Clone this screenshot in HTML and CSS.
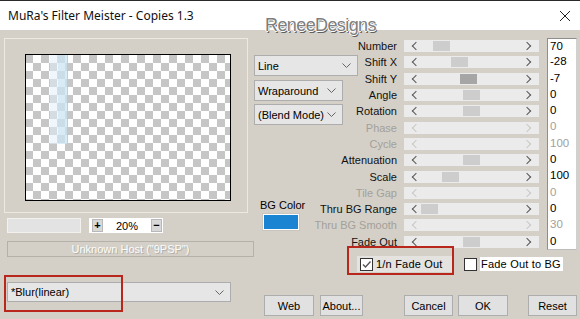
FILE: index.html
```html
<!DOCTYPE html>
<html lang="en">
<head>
    <meta charset="UTF-8">
    <title>MuRa's Filter Meister - Copies 1.3</title>
    <link rel="stylesheet" href="styles.css">
</head>
<body>
<div class="window">
    <div class="titlebar">
        <span class="title">MuRa's Filter Meister - Copies 1.3</span>
        <svg class="close" width="12" height="12" viewBox="0 0 12 12"><path d="M1 1 L11 11 M11 1 L1 11" stroke="#222" stroke-width="1"/></svg>
    </div>

    <div class="body">
        <!-- preview side -->
        <div class="left">
            <div class="preview-group">
                <div class="preview">
                    <div class="streak"></div>
                </div>
            </div>
            <div class="zoom-row">
                <div class="zoom-field"></div>
                <div class="zoom-strip">
                    <span class="zbtn">+</span>
                    <span class="zval">20%</span>
                    <span class="zbtn">&minus;</span>
                </div>
            </div>
            <div class="host">Unknown Host ("9PSP")</div>
            <div class="combo combo-blur">
                <span>*Blur(linear)</span>
                <svg width="9" height="5" viewBox="0 0 9 5"><path d="M0.5 0.5 L4.5 4.5 L8.5 0.5" fill="none" stroke="#666"/></svg>
            </div>
        </div>

        <!-- controls side -->
        <div class="right">
            <div class="top">
                <div class="mid">
                    <div class="combo combo-line">
                        <span>Line</span>
                        <svg width="9" height="5" viewBox="0 0 9 5"><path d="M0.5 0.5 L4.5 4.5 L8.5 0.5" fill="none" stroke="#666"/></svg>
                    </div>
                    <div class="combo combo-short">
                        <span>Wraparound</span>
                        <svg width="9" height="5" viewBox="0 0 9 5"><path d="M0.5 0.5 L4.5 4.5 L8.5 0.5" fill="none" stroke="#666"/></svg>
                    </div>
                    <div class="combo combo-short">
                        <span>(Blend Mode)</span>
                        <svg width="9" height="5" viewBox="0 0 9 5"><path d="M0.5 0.5 L4.5 4.5 L8.5 0.5" fill="none" stroke="#666"/></svg>
                    </div>
                    <div class="bg-label">BG Color</div>
                    <div class="swatch"></div>
                </div>

                <div class="params">
                    <div class="prow">
                        <div class="plabel"><span>Number</span></div>
                        <div class="bar"><i class="al"></i><b class="thumb" style="left:29px"></b><i class="ar"></i></div>
                        <div class="pval">70</div>
                    </div>
                    <div class="prow">
                        <div class="plabel"><span>Shift X</span></div>
                        <div class="bar"><i class="al"></i><b class="thumb" style="left:47px"></b><i class="ar"></i></div>
                        <div class="pval">-28</div>
                    </div>
                    <div class="prow">
                        <div class="plabel"><span>Shift Y</span></div>
                        <div class="bar"><i class="al"></i><b class="thumb focus" style="left:56px"></b><i class="ar"></i></div>
                        <div class="pval">-7</div>
                    </div>
                    <div class="prow">
                        <div class="plabel"><span>Angle</span></div>
                        <div class="bar"><i class="al"></i><b class="thumb" style="left:59px"></b><i class="ar"></i></div>
                        <div class="pval">0</div>
                    </div>
                    <div class="prow">
                        <div class="plabel"><span>Rotation</span></div>
                        <div class="bar"><i class="al"></i><b class="thumb" style="left:59px"></b><i class="ar"></i></div>
                        <div class="pval">0</div>
                    </div>
                    <div class="prow off">
                        <div class="plabel"><span>Phase</span></div>
                        <div class="bar"><i class="al"></i><i class="ar"></i></div>
                        <div class="pval">0</div>
                    </div>
                    <div class="prow off">
                        <div class="plabel"><span>Cycle</span></div>
                        <div class="bar"><i class="al"></i><i class="ar"></i></div>
                        <div class="pval">100</div>
                    </div>
                    <div class="prow">
                        <div class="plabel"><span>Attenuation</span></div>
                        <div class="bar"><i class="al"></i><b class="thumb" style="left:59px"></b><i class="ar"></i></div>
                        <div class="pval">0</div>
                    </div>
                    <div class="prow">
                        <div class="plabel"><span>Scale</span></div>
                        <div class="bar"><i class="al"></i><b class="thumb" style="left:38px"></b><i class="ar"></i></div>
                        <div class="pval">100</div>
                    </div>
                    <div class="prow off">
                        <div class="plabel"><span>Tile Gap</span></div>
                        <div class="bar"><i class="al"></i><i class="ar"></i></div>
                        <div class="pval">0</div>
                    </div>
                    <div class="prow">
                        <div class="plabel"><span>Thru BG Range</span></div>
                        <div class="bar"><i class="al"></i><b class="thumb" style="left:17px"></b><i class="ar"></i></div>
                        <div class="pval">0</div>
                    </div>
                    <div class="prow off">
                        <div class="plabel"><span>Thru BG Smooth</span></div>
                        <div class="bar"><i class="al"></i><i class="ar"></i></div>
                        <div class="pval">30</div>
                    </div>
                    <div class="prow">
                        <div class="plabel"><span>Fade Out</span></div>
                        <div class="bar"><i class="al"></i><b class="thumb" style="left:59px"></b><i class="ar"></i></div>
                        <div class="pval">0</div>
                    </div>
                </div>
            </div>

            <div class="checks">
                <label class="check check-on">
                    <span class="box"><svg width="11" height="11" viewBox="0 0 11 11"><path d="M2 5.5 L4.5 8 L9.5 2.5" fill="none" stroke="#555" stroke-width="1.4"/></svg></span>
                    <span class="ctext">1/n Fade Out</span>
                </label>
                <label class="check check-off">
                    <span class="box"></span>
                    <span class="ctext">Fade Out to BG</span>
                </label>
            </div>

            <div class="buttons">
                <button class="btn btn-web">Web</button>
                <button class="btn btn-about">About...</button>
                <button class="btn btn-cancel">Cancel</button>
                <button class="btn btn-ok">OK</button>
                <button class="btn btn-reset">Reset</button>
            </div>
        </div>
    </div>

    <!-- tutorial annotations -->
    <div class="mark mark-blur"></div>
    <div class="mark mark-fade"></div>

    <div class="watermark">ReneeDesigns</div>
</div>
</body>
</html>
```

FILE: styles.css
```css
* {
    box-sizing: border-box;
}
body {
    margin: 0;
    font-family: "Liberation Sans", Arial, sans-serif;
    font-size: 11px;
    font-weight: 400;
    color: #000;
    background-color: #d4d0c8;
}
.window {
    position: relative;
    width: 580px;
    height: 319px;
    overflow: hidden;
    background-color: #d4d0c8;
}
.titlebar {
    height: 30px;
    background-color: #fff;
    border-top: 1px solid #2a2a2a;
    display: flex;
    align-items: center;
    justify-content: space-between;
    padding: 0 9px 0 8px;
}
.title {
    font-family: "Noto Sans", "Open Sans", sans-serif;
    font-size: 12px;
    color: #111;
}
.watermark {
    position: absolute;
    left: 265px;
    top: 15px;
    font-family: "Liberation Sans", Arial, sans-serif;
    font-size: 18px;
    letter-spacing: -0.6px;
    color: #7e7e7e;
    text-shadow: -1px 0 #fff, 1px 0 #fff, 0 -1px #fff, 0 1px #fff, -1px -1px #fff, 1px 2px #5e5e5e;
}

.body {
    display: flex;
    height: 289px;
}
.left {
    width: 254px;
    padding-left: 4px;
    display: flex;
    flex-direction: column;
}
.preview-group {
    margin-top: 8px;
    width: 244px;
    height: 175px;
    border: 1px solid #ece9e3;
    padding: 15px 0 0 20px;
}
.preview {
    position: relative;
    width: 206px;
    height: 147px;
    border: 1px solid #000;
    background-color: #fff;
    background-image: repeating-conic-gradient(#c6c6c6 0 25%, #fff 0 50%);
    background-size: 16px 16px;
    background-position: 7px 0;
}
.streak {
    position: absolute;
    left: 24px;
    top: 0;
    width: 18px;
    height: 89px;
    background: linear-gradient(90deg, rgba(225, 240, 250, 0.55) 0 45%, rgba(205, 228, 245, 0.75) 45% 94%, rgba(170, 205, 230, 0.9) 94%);
}
.zoom-row {
    display: flex;
    margin-top: 5px;
    height: 15px;
}
.zoom-field {
    width: 74px;
    margin-left: 3px;
    background-color: #e3e3e3;
    border: 1px solid #f2f1ee;
}
.zoom-strip {
    margin-left: 8px;
    width: 74px;
    background-color: #fff;
    display: flex;
    align-items: center;
    padding: 0 1px 0 3px;
}
.zbtn {
    width: 11px;
    height: 13px;
    background-color: #d8d8d8;
    border: 1px solid #b8b8b8;
    font-size: 11px;
    font-weight: bold;
    line-height: 11px;
    text-align: center;
}
.zval {
    flex: 1;
    text-align: center;
    font-size: 11px;
}
.host {
    margin-top: 8px;
    margin-left: 3px;
    width: 247px;
    height: 16px;
    border: 1px solid #b4b1ab;
    text-align: center;
    line-height: 14px;
    font-size: 11px;
    color: #fcfcfb;
    text-shadow: 1px 1px #b3afa8;
}
.combo {
    height: 21px;
    background-color: #e6e6e6;
    border: 1px solid #adadad;
    display: flex;
    align-items: center;
    justify-content: space-between;
    padding: 0 6px 0 3px;
    font-size: 11px;
}
.combo-blur {
    margin-top: 25px;
    margin-left: 3px;
    width: 224px;
    height: 20px;
}

.right {
    width: 326px;
    display: flex;
    flex-direction: column;
}
.top {
    display: flex;
    height: 220px;
}
.mid {
    width: 104px;
    padding-top: 25px;
}
.combo-line {
    width: 104px;
}
.combo-short {
    width: 89px;
    margin-top: 3px;
}
.combo-line + .combo-short {
    margin-top: 4px;
}
.bg-label {
    margin-top: 74px;
    margin-left: 6px;
}
.swatch {
    margin-top: 3px;
    margin-left: 9px;
    width: 36px;
    height: 16px;
    background-color: #1a84d2;
    border: 1px solid #fff;
    outline: 1px solid #c9c6c0;
}

.params {
    padding-top: 8px;
}
.prow {
    display: flex;
    align-items: center;
    height: 16.3px;
}
.plabel {
    width: 39px;
    display: flex;
    justify-content: flex-end;
    white-space: nowrap;
    font-weight: 400;
    color: #111;
}
.bar {
    position: relative;
    margin-left: 7px;
    width: 135px;
    height: 12px;
    background-color: #ebebeb;
}
.thumb {
    position: absolute;
    top: 1px;
    width: 17px;
    height: 10px;
    background-color: #cdcdcd;
}
.thumb.focus {
    background-color: #a6a6a6;
}
.al, .ar {
    position: absolute;
    top: 3px;
    width: 6px;
    height: 6px;
    border-left: 1.5px solid #555;
    border-bottom: 1.5px solid #555;
}
.al {
    left: 9px;
    transform: rotate(45deg);
}
.ar {
    right: 9px;
    transform: rotate(-135deg);
}
.pval {
    margin-left: 8px;
    width: 30px;
    height: 16.3px;
    background-color: #fff;
    border-left: 1px solid #8e8e8e;
    border-right: 1px solid #d0d0d0;
    padding-left: 2px;
    font-size: 11.5px;
    line-height: 15px;
}
.prow:first-child .pval {
    border-top: 1px solid #8e8e8e;
}
.prow:last-child .pval {
    border-bottom: 1px solid #bcbcbc;
}
.off .plabel,
.off .pval {
    color: #a3a09a;
}
.off .al, .off .ar {
    border-color: #c8c8c8;
}

.checks {
    display: flex;
    margin-top: 6px;
    height: 16px;
}
.check {
    display: flex;
    align-items: center;
    font-weight: 400;
}
.check-on {
    margin-left: 103px;
    width: 95px;
    background-color: #e4e3e0;
    padding-left: 3px;
}
.check-off {
    margin-left: 12px;
}
.box {
    width: 13px;
    height: 13px;
    background-color: #fff;
    border: 1px solid #333;
    display: flex;
    align-items: center;
    justify-content: center;
}
.ctext {
    margin-left: 3px;
    letter-spacing: 0.2px;
}
.check-off .ctext {
    background-color: #fff;
    padding: 1px 2px 1px 1px;
}

.buttons {
    display: flex;
    margin-top: 23px;
}
.btn {
    height: 21px;
    background-color: #e1e1e1;
    border: 1px solid #adadad;
    font-family: "Liberation Sans", Arial, sans-serif;
    font-size: 11px;
    padding: 0;
    color: #000;
}
.btn-web { margin-left: 10px; width: 50px; }
.btn-about { margin-left: 6px; width: 43px; }
.btn-cancel { margin-left: 41px; width: 49px; }
.btn-ok { margin-left: 5px; width: 50px; }
.btn-reset { margin-left: 20px; width: 49px; }

.mark {
    position: absolute;
    border: 2px solid #b9261b;
}
.mark-blur {
    left: 4px;
    top: 275px;
    width: 119px;
    height: 37px;
}
.mark-fade {
    left: 347px;
    top: 246px;
    width: 107px;
    height: 29px;
}
```
